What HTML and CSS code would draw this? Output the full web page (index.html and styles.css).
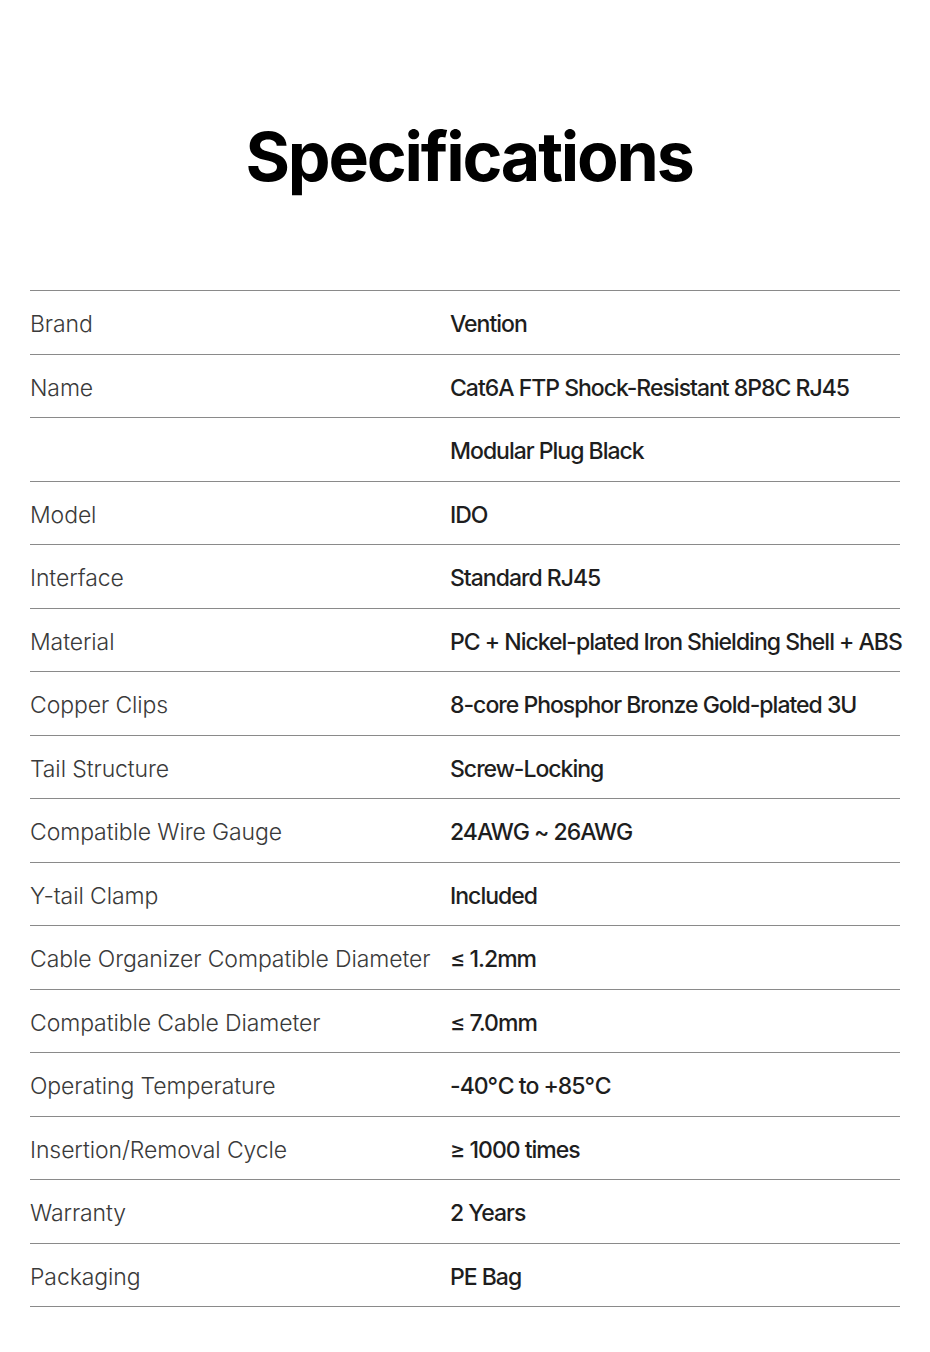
FILE: index.html
```html
<!DOCTYPE html>
<html lang="en">
<head>
<meta charset="utf-8">
<title>Specifications</title>
<link rel="stylesheet" href="styles.css">
</head>
<body>
<main class="page">
  <h1 class="title">Specifications</h1>
  <div class="specs">
    <div class="row"><span class="label">Brand</span><span class="value">Vention</span></div>
    <div class="row"><span class="label">Name</span><span class="value">Cat6A FTP Shock-Resistant 8P8C RJ45</span></div>
    <div class="row"><span class="label"></span><span class="value">Modular Plug Black</span></div>
    <div class="row"><span class="label">Model</span><span class="value">IDO</span></div>
    <div class="row"><span class="label">Interface</span><span class="value">Standard RJ45</span></div>
    <div class="row"><span class="label">Material</span><span class="value">PC + Nickel-plated Iron Shielding Shell + ABS</span></div>
    <div class="row"><span class="label">Copper Clips</span><span class="value">8-core Phosphor Bronze Gold-plated 3U</span></div>
    <div class="row"><span class="label">Tail Structure</span><span class="value">Screw-Locking</span></div>
    <div class="row"><span class="label">Compatible Wire Gauge</span><span class="value">24AWG ~ 26AWG</span></div>
    <div class="row"><span class="label">Y-tail Clamp</span><span class="value">Included</span></div>
    <div class="row"><span class="label">Cable Organizer Compatible Diameter</span><span class="value">≤ 1.2mm</span></div>
    <div class="row"><span class="label">Compatible Cable Diameter</span><span class="value">≤ 7.0mm</span></div>
    <div class="row"><span class="label">Operating Temperature</span><span class="value">-40℃ to +85℃</span></div>
    <div class="row"><span class="label">Insertion/Removal Cycle</span><span class="value">≥ 1000 times</span></div>
    <div class="row"><span class="label">Warranty</span><span class="value">2 Years</span></div>
    <div class="row"><span class="label">Packaging</span><span class="value">PE Bag</span></div>
  </div>
</main>
</body>
</html>
```
FILE: styles.css
```css
html, body {
  margin: 0;
  padding: 0;
  background: #ffffff;
}
.page {
  width: 930px;
  height: 1352px;
  box-sizing: border-box;
  padding: 0 30px;
  font-family: Inter, "Noto Sans", sans-serif;
}
.title {
  margin: 0 0 92px 0;
  padding: 114px 0 0 8px;
  text-align: center;
  font-size: 68px;
  line-height: 84px;
  font-weight: 700;
  color: #000;
  letter-spacing: -2.2px;
}
.specs {
  border-top: 1px solid #8a8a8a;
}
.row {
  display: grid;
  grid-template-columns: 420px 1fr;
  align-items: center;
  height: 58.5px;
  padding-top: 4px;
  box-sizing: content-box;
  border-bottom: 1px solid #8a8a8a;
  font-size: 23px;
}
.label,
.value {
  white-space: nowrap;
}
.label {
  color: #3a3a3a;
  font-weight: 300;
  letter-spacing: -0.1px;
}
.value {
  color: #1e1e1e;
  font-weight: 500;
  letter-spacing: -1px;
}
```
